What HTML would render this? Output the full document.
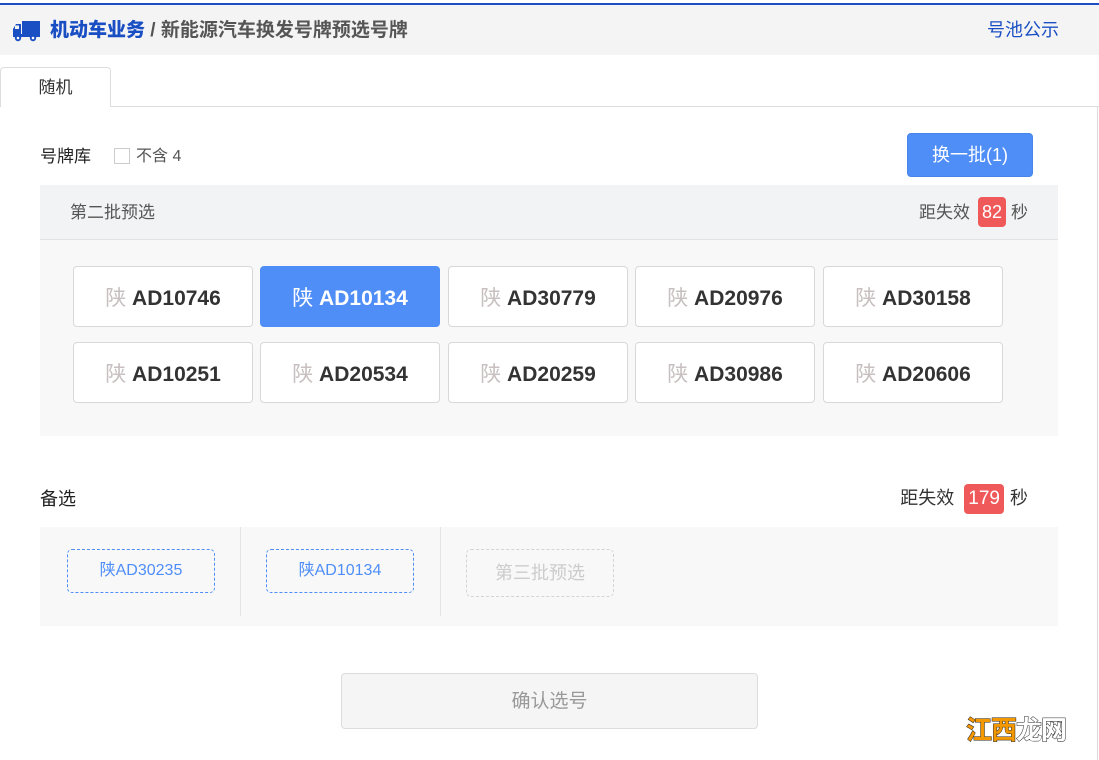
<!DOCTYPE html>
<html><head><meta charset="utf-8"><style>
*{margin:0;padding:0;box-sizing:border-box}
body{width:1099px;height:760px;background:#fff;font-family:"Liberation Sans","Noto Sans CJK SC",sans-serif;position:relative;overflow:hidden;color:#333}
.abs{position:absolute}
.top{left:0;top:3px;width:1099px;height:2px;background:#1a4fc4}
.hdr{left:0;top:5px;width:1099px;height:50px;background:#f4f4f4}
.title{left:50px;top:17px;font-size:19px;font-weight:bold;line-height:28px;color:#555}
.title b{color:#1a4fc4}
.pool{left:987px;top:18px;font-size:18px;color:#1a4fc4;line-height:24px}
.tab{left:0;top:67px;width:111px;height:40px;border:1px solid #ddd;border-bottom:none;border-radius:4px 4px 0 0;background:#fff;text-align:center;line-height:40px;font-size:17px;z-index:2}
.line{left:110px;top:106px;width:989px;height:1px;background:#ddd}
.rline{left:1097px;top:106px;width:1px;height:654px;background:#ddd}
.plate{width:180px;height:61px;border:1px solid #d8d8d8;border-radius:4px;background:#fff;text-align:center;line-height:63px;font-size:21px;font-weight:bold;color:#333}
.plate span{font-weight:normal;color:#c8c0c0}
.plate.sel{background:#4f8ef7;border-color:#4f8ef7;color:#fff}
.plate.sel span{color:#fff}
.badge{display:inline-block;background:#f0595a;color:#fff;border-radius:4px;padding:0 4px;margin:0 4px;line-height:30px}
.dash{width:148px;height:44px;border:1px dashed #4f8ef7;border-radius:5px;text-align:center;line-height:42px;color:#4f8ef7;font-size:16px}
</style></head><body>
<div class="abs top"></div>
<div class="abs hdr"></div>
<svg class="abs" style="left:13px;top:20px" width="27" height="22" viewBox="0 0 27 22"><rect x="9" y="1" width="18" height="14" fill="#1a4fc4"/><path d="M0 9 L3 4 H8 V15 H0Z" fill="#1a4fc4"/><rect x="2" y="5.5" width="4" height="3.5" fill="#f4f4f4"/><rect x="0" y="14" width="27" height="3" fill="#1a4fc4"/><circle cx="5" cy="18" r="3.2" fill="#1a4fc4"/><circle cx="5" cy="18" r="1.3" fill="#fff"/><circle cx="20" cy="18" r="3.2" fill="#1a4fc4"/><circle cx="20" cy="18" r="1.3" fill="#fff"/></svg>
<div class="abs title"><b>机动车业务</b> / 新能源汽车换发号牌预选号牌</div>
<div class="abs pool">号池公示</div>
<div class="abs tab">随机</div>
<div class="abs line"></div>
<div class="abs rline"></div>

<div class="abs" style="left:40px;top:145px;font-size:17px;color:#222;line-height:24px">号牌库</div>
<div class="abs" style="left:114px;top:148px;width:16px;height:16px;border:1px solid #ccc;background:#fff"></div>
<div class="abs" style="left:136px;top:146px;font-size:16px;color:#555;line-height:22px">不含 4</div>
<div class="abs" style="left:907px;top:133px;width:126px;height:44px;background:#4f8ef7;border:1px solid #4785ea;border-radius:4px;color:#fff;font-size:18px;text-align:center;line-height:42px">换一批(1)</div>

<div class="abs" style="left:40px;top:185px;width:1018px;height:55px;background:#f2f3f5;border-bottom:1px solid #e2e2e2"></div>
<div class="abs" style="left:70px;top:201px;font-size:17px;color:#555;line-height:24px">第二批预选</div>
<div class="abs" style="left:914px;top:197px;font-size:17px;color:#555;line-height:30px;width:114px;text-align:right;white-space:nowrap">距失效<span class="badge" style="margin-left:8px;margin-right:5px;font-size:18px">82</span>秒</div>
<div class="abs" style="left:40px;top:240px;width:1018px;height:196px;background:#f8f8f8"></div>

<div class="abs plate" style="left:73px;top:266px"><span>陕</span> AD10746</div>
<div class="abs plate sel" style="left:260px;top:266px"><span>陕</span> AD10134</div>
<div class="abs plate" style="left:448px;top:266px"><span>陕</span> AD30779</div>
<div class="abs plate" style="left:635px;top:266px"><span>陕</span> AD20976</div>
<div class="abs plate" style="left:823px;top:266px"><span>陕</span> AD30158</div>
<div class="abs plate" style="left:73px;top:342px"><span>陕</span> AD10251</div>
<div class="abs plate" style="left:260px;top:342px"><span>陕</span> AD20534</div>
<div class="abs plate" style="left:448px;top:342px"><span>陕</span> AD20259</div>
<div class="abs plate" style="left:635px;top:342px"><span>陕</span> AD30986</div>
<div class="abs plate" style="left:823px;top:342px"><span>陕</span> AD20606</div>

<div class="abs" style="left:40px;top:486px;font-size:18px;color:#222;line-height:26px">备选</div>
<div class="abs" style="left:896px;top:483px;font-size:18px;color:#333;line-height:31px;width:132px;text-align:right;white-space:nowrap">距失效<span class="badge" style="margin-left:10px;margin-right:6px;font-size:19px">179</span>秒</div>
<div class="abs" style="left:40px;top:527px;width:1018px;height:99px;background:#f8f8f8"></div>
<div class="abs" style="left:240px;top:527px;width:1px;height:89px;background:#e4e4e4"></div>
<div class="abs" style="left:440px;top:527px;width:1px;height:89px;background:#e4e4e4"></div>
<div class="abs dash" style="left:67px;top:549px">陕AD30235</div>
<div class="abs dash" style="left:266px;top:549px">陕AD10134</div>
<div class="abs dash" style="left:466px;top:549px;height:48px;line-height:46px;border-color:#d4d4d4;color:#ccc;font-size:18px">第三批预选</div>

<div class="abs" style="left:341px;top:673px;width:417px;height:56px;background:#f5f5f5;border:1px solid #ddd;border-radius:4px;text-align:center;line-height:56px;font-size:19px;color:#999">确认选号</div>

<div class="abs" style="left:966px;top:714px;font-size:26px;font-weight:bold;line-height:32px;letter-spacing:-1px;-webkit-text-stroke:1px #222;paint-order:stroke fill"><span style="color:#f39800">江西</span><span style="color:#fff">龙网</span></div>
</body></html>
